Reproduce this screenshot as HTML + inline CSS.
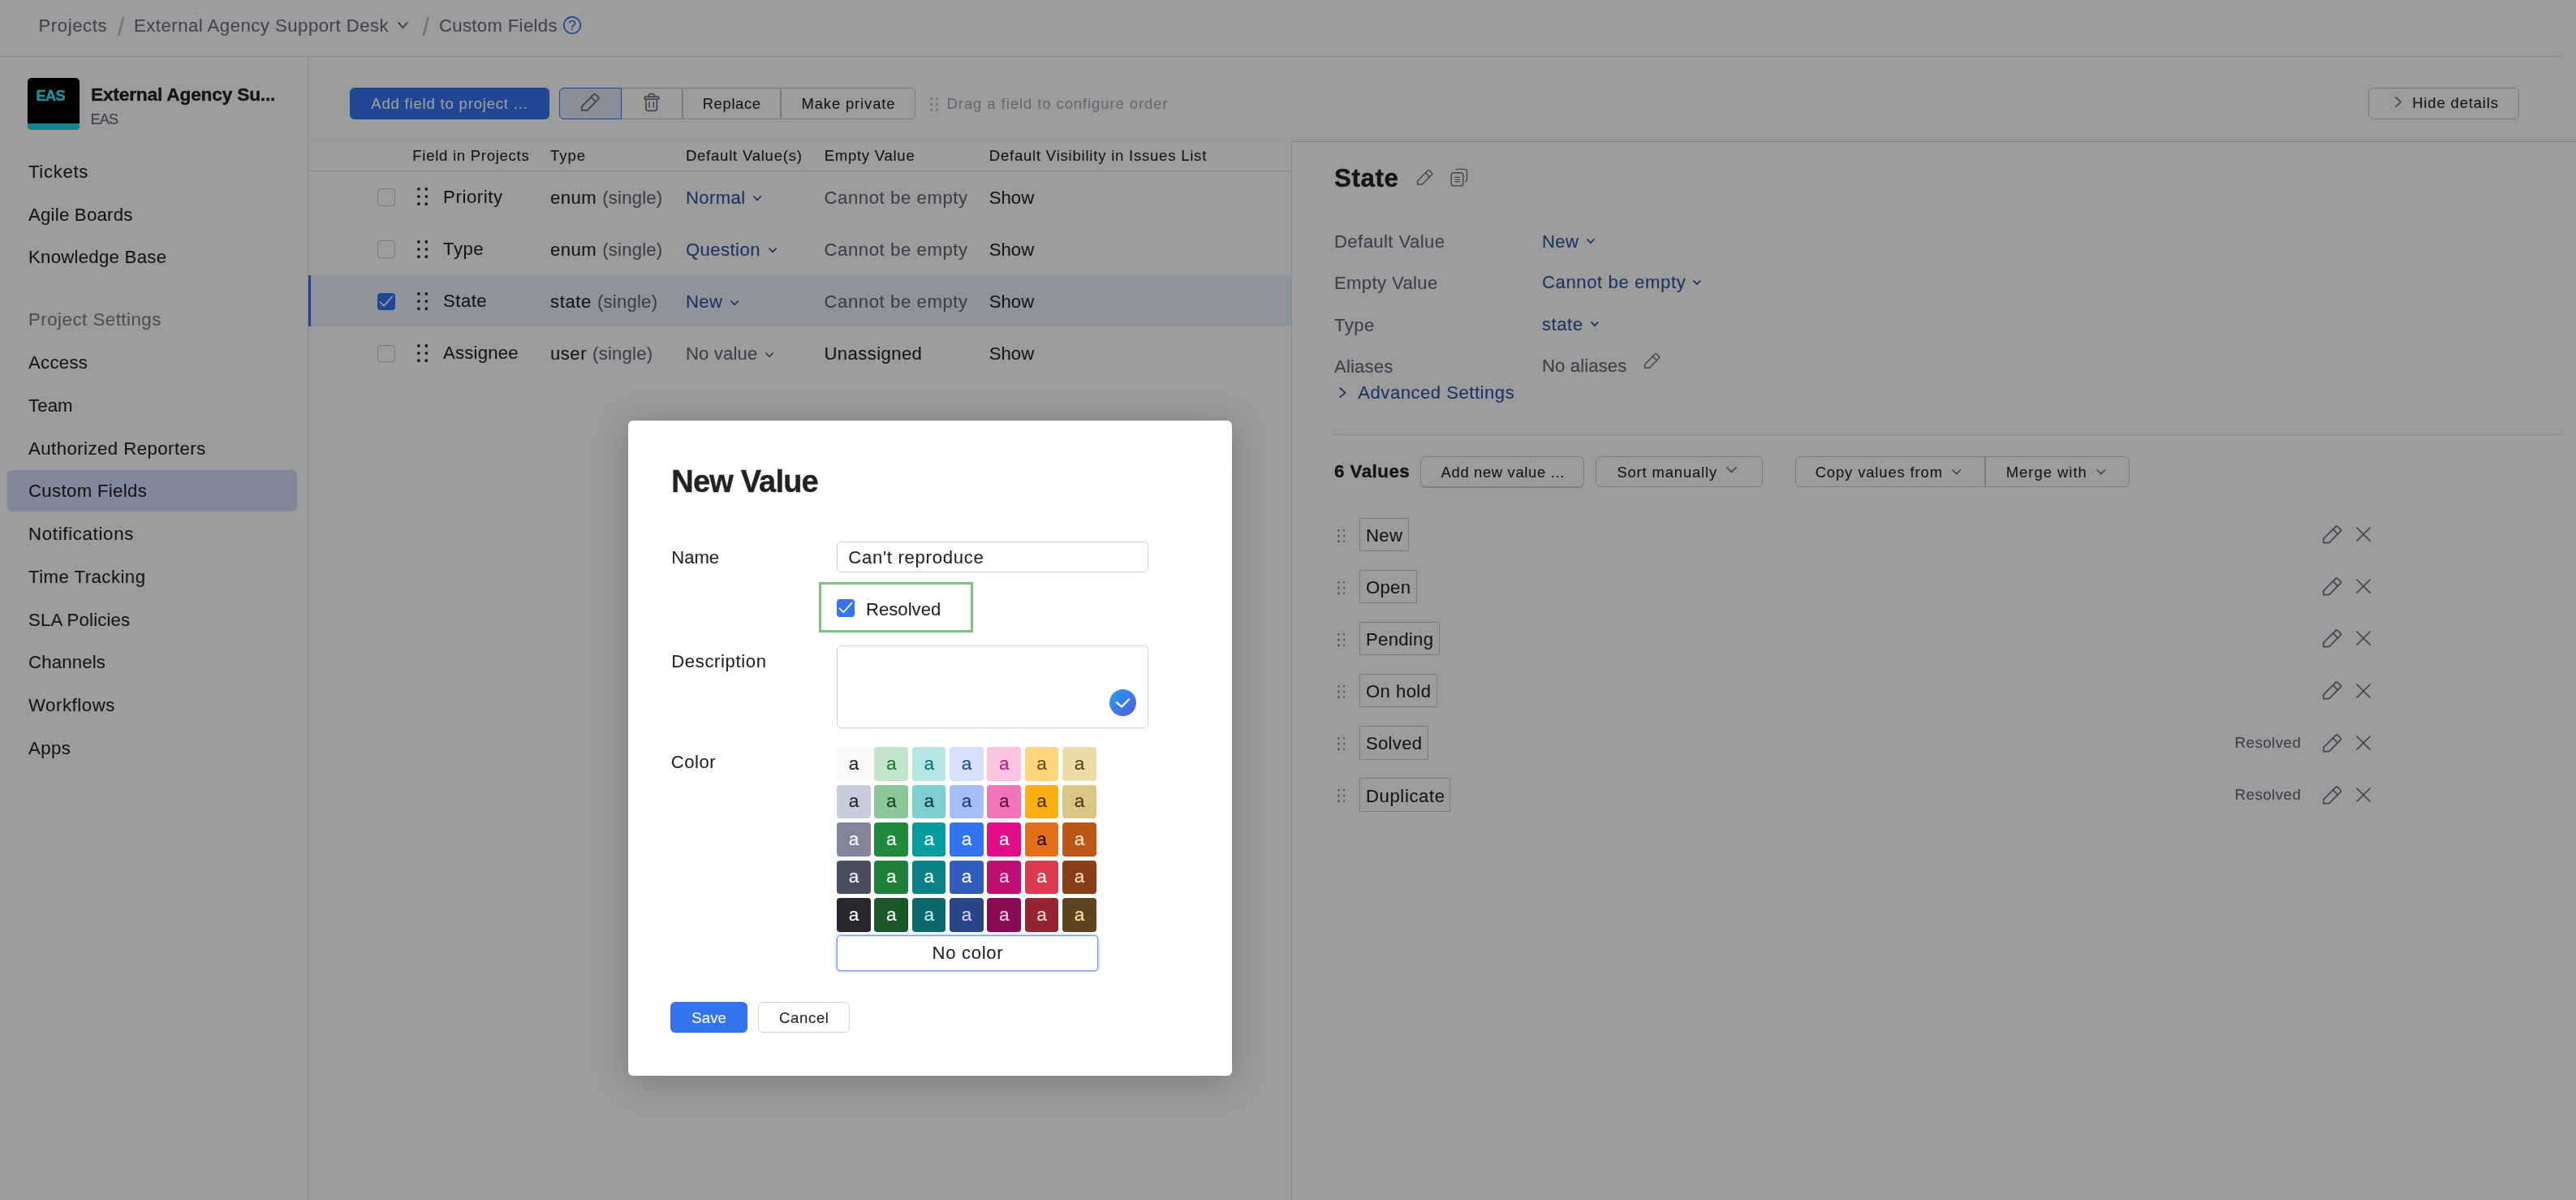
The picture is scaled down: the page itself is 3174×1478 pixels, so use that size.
<!DOCTYPE html>
<html lang="en">
<head>
<meta charset="utf-8">
<title>Custom Fields - External Agency Support Desk</title>
<style>
html,body{margin:0;padding:0;width:3174px;height:1478px;overflow:hidden;background:#fff;}
body{position:relative;font-family:"Liberation Sans", sans-serif;-webkit-font-smoothing:antialiased;}
.t{position:absolute;white-space:nowrap;line-height:1;font-family:"Liberation Sans", sans-serif;-webkit-text-stroke:0.1px;}
.b{position:absolute;display:block;}
header,nav,main,section,aside,form{display:block;margin:0;padding:0;}
#page,#overlay,#layer{position:absolute;left:0;top:0;width:3174px;height:1478px;}
#page,#layer{will-change:transform;}
#overlay{background:rgba(0,0,0,0.39);}
#dialog{position:absolute;left:774px;top:518px;width:744px;height:806.5px;background:#fff;border-radius:6px;box-shadow:0 6px 46px 2px rgba(0,0,0,0.2),0 0 4px rgba(0,0,0,0.05);}
</style>
</head>
<body>
<div id="page">
<header>
<div class="b" style="left:0.0px;top:69.0px;width:3155.0px;height:1.4px;background:#dfe1e5"></div>
<span id="t1" class="t" style="left:47.5px;top:21.0px;font-size:22.1px;color:#6c7084;letter-spacing:0.598px;">Projects</span>
<span id="t2" class="t" style="left:144.7px;top:18.0px;font-size:31.0px;color:#b9bcc8;">/</span>
<span id="t3" class="t" style="left:165.0px;top:21.0px;font-size:22.1px;color:#6c7084;letter-spacing:0.516px;">External Agency Support Desk</span>
<svg class="b" style="left:489.4px;top:25.9px;" width="14.8" height="10.0" viewBox="-2.000000 -2.000000 14.800000 10.000000" fill="none"><path d="M0 0 L5.40 6.00 L10.80 0" stroke="#6c7084" stroke-width="1.90" stroke-linecap="round" stroke-linejoin="round"/></svg>
<span id="t4" class="t" style="left:520.5px;top:18.0px;font-size:31.0px;color:#b9bcc8;">/</span>
<span id="t5" class="t" style="left:541.0px;top:21.0px;font-size:22.1px;color:#6c7084;letter-spacing:0.358px;">Custom Fields</span>
<svg class="b" style="left:693.0px;top:18.7px;" width="24.0" height="24.0" viewBox="0 0 24 24" fill="none"><circle cx="12.05" cy="12.05" r="10.2" stroke="#3574f0" stroke-width="1.7"/></svg>
<span id="t6" class="t" style="left:700.3px;top:23.0px;font-size:17.3px;color:#3574f0;">?</span>
</header>
<nav>
<div class="b" style="left:379.0px;top:70.0px;width:1.3px;height:1408.0px;background:#dfe1e5"></div>
<div class="b" style="left:34.0px;top:96.0px;width:64.0px;height:64.0px;background:#000;border-radius:5px;overflow:hidden"></div>
<div class="b" style="left:34.0px;top:152.0px;width:64.0px;height:8.0px;background:#27d7ee;border-radius:0 0 5px 5px"></div>
<span id="t7" class="t" style="left:44.4px;top:109.0px;font-size:18.2px;color:#30ecff;font-weight:700;-webkit-text-stroke:0.4px;letter-spacing:-0.553px;">EAS</span>
<span id="t8" class="t" style="left:112.0px;top:105.0px;font-size:22.7px;color:#1f2326;font-weight:700;-webkit-text-stroke:0.4px;letter-spacing:-0.188px;">External Agency Su...</span>
<span id="t9" class="t" style="left:111.6px;top:138.0px;font-size:18.3px;color:#62687d;letter-spacing:-0.997px;">EAS</span>
<div class="b" style="left:9.0px;top:579.0px;width:357.0px;height:51.0px;background:#d4defc;border-radius:6px"></div>
<span id="t10" class="t" style="left:35.0px;top:201.0px;font-size:22.2px;color:#1f2326;letter-spacing:0.641px;">Tickets</span>
<span id="t11" class="t" style="left:35.0px;top:254.0px;font-size:22.2px;color:#1f2326;letter-spacing:0.226px;">Agile Boards</span>
<span id="t12" class="t" style="left:35.0px;top:306.0px;font-size:22.2px;color:#1f2326;letter-spacing:0.267px;">Knowledge Base</span>
<span id="t13" class="t" style="left:35.0px;top:383.0px;font-size:22.2px;color:#7d8090;letter-spacing:0.527px;">Project Settings</span>
<span id="t14" class="t" style="left:35.0px;top:436.0px;font-size:22.2px;color:#1f2326;letter-spacing:0.277px;">Access</span>
<span id="t15" class="t" style="left:35.0px;top:489.0px;font-size:22.2px;color:#1f2326;letter-spacing:0.111px;">Team</span>
<span id="t16" class="t" style="left:35.0px;top:542.0px;font-size:22.2px;color:#1f2326;letter-spacing:0.455px;">Authorized Reporters</span>
<span id="t17" class="t" style="left:35.0px;top:594.0px;font-size:22.2px;color:#1f2326;letter-spacing:0.334px;">Custom Fields</span>
<span id="t18" class="t" style="left:35.0px;top:647.0px;font-size:22.2px;color:#1f2326;letter-spacing:0.703px;">Notifications</span>
<span id="t19" class="t" style="left:35.0px;top:700.0px;font-size:22.2px;color:#1f2326;letter-spacing:0.458px;">Time Tracking</span>
<span id="t20" class="t" style="left:35.0px;top:753.0px;font-size:22.2px;color:#1f2326;letter-spacing:0.169px;">SLA Policies</span>
<span id="t21" class="t" style="left:35.0px;top:805.0px;font-size:22.2px;color:#1f2326;letter-spacing:0.164px;">Channels</span>
<span id="t22" class="t" style="left:35.0px;top:858.0px;font-size:22.2px;color:#1f2326;letter-spacing:0.560px;">Workflows</span>
<span id="t23" class="t" style="left:35.0px;top:911.0px;font-size:22.2px;color:#1f2326;letter-spacing:0.407px;">Apps</span>
</nav>
<main>
<section>
<div class="b" style="left:431.0px;top:108.0px;width:246.0px;height:39.0px;background:#3574f0;border-radius:6px"></div>
<span id="t24" class="t" style="left:457.3px;top:119.0px;font-size:18.5px;color:#fff;letter-spacing:0.813px;">Add field to project ...</span>
<div class="b" style="left:689.3px;top:108.2px;width:438.8px;height:38.4px;border:1.6px solid #c9cbd3;box-sizing:border-box;border-radius:6px"></div>
<div class="b" style="left:840.2px;top:108.2px;width:1.4px;height:38.4px;background:#c9cbd3"></div>
<div class="b" style="left:961.2px;top:108.2px;width:1.4px;height:38.4px;background:#c9cbd3"></div>
<div class="b" style="left:689.3px;top:108.2px;width:76.8px;height:38.4px;background:#e2e9fb;border:1.6px solid #3574f0;box-sizing:border-box;border-radius:6px 0 0 6px"></div>
<svg class="b" style="left:715.3px;top:113.8px;" width="24.7" height="23.9" viewBox="-0.1 -0.85 24.25 23.45" fill="none"><g stroke="#6e7385" stroke-width="1.81" stroke-linejoin="round" stroke-linecap="round"><path d="M1.75 20.75 V15.9 L16.1 1.55 Q17.2 0.45 18.3 1.55 L21.75 5 Q22.85 6.1 21.75 7.2 L8.2 20.75 Z"/><path d="M12.9 4.75 L18.55 10.4"/></g></svg>
<svg class="b" style="left:793.0px;top:113.5px;" width="20.2" height="24.0" viewBox="0 0 20.2 24" fill="none"><g stroke="#6e7385" stroke-width="1.7" stroke-linecap="round" stroke-linejoin="round"><path d="M6.25 5.4 V3.55 a2 2 0 0 1 2 -2 h3 a2 2 0 0 1 2 2 V5.4"/><rect x="1.0" y="5.1" width="17.9" height="3.0" rx="1.3"/><path d="M2.9 8.1 V19.8 a2.5 2.5 0 0 0 2.5 2.5 H13.9 a2.5 2.5 0 0 0 2.5 -2.5 V8.1"/><path d="M7.1 11.7 V18.2 M12.3 11.7 V18.2" stroke-width="1.5"/></g></svg>
<span id="t25" class="t" style="left:865.7px;top:119.0px;font-size:18.4px;color:#1f2326;letter-spacing:0.653px;">Replace</span>
<span id="t26" class="t" style="left:987.5px;top:119.0px;font-size:18.4px;color:#1f2326;letter-spacing:0.884px;">Make private</span>
<svg class="b" style="left:1145.5px;top:119.5px;" width="10.0" height="17.0" viewBox="0 0 10.000000 17.000000" fill="none"><circle cx="1.50" cy="1.50" r="1.50" fill="#b9bbc6"/><circle cx="8.50" cy="1.50" r="1.50" fill="#b9bbc6"/><circle cx="1.50" cy="8.50" r="1.50" fill="#b9bbc6"/><circle cx="8.50" cy="8.50" r="1.50" fill="#b9bbc6"/><circle cx="1.50" cy="15.50" r="1.50" fill="#b9bbc6"/><circle cx="8.50" cy="15.50" r="1.50" fill="#b9bbc6"/></svg>
<span id="t27" class="t" style="left:1166.6px;top:119.0px;font-size:18.4px;color:#a9acba;letter-spacing:0.956px;">Drag a field to configure order</span>
<div class="b" style="left:2918.4px;top:108.3px;width:185.2px;height:38.3px;border:1.6px solid #c9cbd3;box-sizing:border-box;border-radius:6px"></div>
<svg class="b" style="left:2949.7px;top:118.4px;" width="10.2" height="15.2" viewBox="-2.000000 -2.000000 10.200000 15.200000" fill="none"><path d="M0 0 L6.20 5.60 L0 11.20" stroke="#6e7385" stroke-width="1.70" stroke-linecap="round" stroke-linejoin="round"/></svg>
<span id="t28" class="t" style="left:2972.2px;top:118.0px;font-size:18.4px;color:#1f2326;letter-spacing:0.882px;">Hide details</span>
</section>
<section>
<div class="b" style="left:380.0px;top:172.0px;width:2794.0px;height:1.2px;background:#f1f2f5"></div>
<div class="b" style="left:380.0px;top:210.0px;width:1211.0px;height:1.4px;background:#dfe1e5"></div>
<div class="b" style="left:380.0px;top:339.4px;width:1211.0px;height:62.6px;background:#e9f0ff"></div>
<div class="b" style="left:380.0px;top:339.4px;width:3.2px;height:62.6px;background:#3574f0"></div>
<span id="t29" class="t" style="left:508.3px;top:183.0px;font-size:18.5px;color:#1f2326;letter-spacing:0.737px;">Field in Projects</span>
<span id="t30" class="t" style="left:678.1px;top:183.0px;font-size:18.5px;color:#1f2326;letter-spacing:0.964px;">Type</span>
<span id="t31" class="t" style="left:844.9px;top:183.0px;font-size:18.5px;color:#1f2326;letter-spacing:0.781px;">Default Value(s)</span>
<span id="t32" class="t" style="left:1015.7px;top:183.0px;font-size:18.5px;color:#1f2326;letter-spacing:0.748px;">Empty Value</span>
<span id="t33" class="t" style="left:1218.8px;top:183.0px;font-size:18.5px;color:#1f2326;letter-spacing:0.787px;">Default Visibility in Issues List</span>
<div class="b" style="left:465.4px;top:232.3px;width:21.4px;height:21.4px;background:#fff;border:1.4px solid #c4c6cf;box-sizing:border-box;border-radius:4px"></div>
<svg class="b" style="left:514.0px;top:231.4px;" width="13.2" height="22.0" viewBox="0 0 13.200000 22.000000" fill="none"><circle cx="1.85" cy="1.85" r="1.85" fill="#1f2326"/><circle cx="11.35" cy="1.85" r="1.85" fill="#1f2326"/><circle cx="1.85" cy="11.00" r="1.85" fill="#1f2326"/><circle cx="11.35" cy="11.00" r="1.85" fill="#1f2326"/><circle cx="1.85" cy="20.15" r="1.85" fill="#1f2326"/><circle cx="11.35" cy="20.15" r="1.85" fill="#1f2326"/></svg>
<span id="t34" class="t" style="left:546.1px;top:232.0px;font-size:22.1px;color:#1f2326;letter-spacing:0.607px;">Priority</span>
<span id="t35" class="t" style="left:678.1px;top:233.0px;font-size:22.1px;color:#1f2326;letter-spacing:0.406px;">enum</span>
<span id="t36" class="t" style="left:742.2px;top:233.0px;font-size:22.1px;color:#62687d;letter-spacing:0.221px;">(single)</span>
<span id="t37" class="t" style="left:844.9px;top:233.0px;font-size:22.1px;color:#2e55a3;letter-spacing:0.419px;">Normal</span>
<svg class="b" style="left:927.2px;top:240.3px;" width="12.2" height="8.3" viewBox="-2.000000 -2.000000 12.200000 8.300000" fill="none"><path d="M0 0 L4.10 4.30 L8.20 0" stroke="#2e55a3" stroke-width="1.80" stroke-linecap="round" stroke-linejoin="round"/></svg>
<span id="t38" class="t" style="left:1015.5px;top:233.0px;font-size:22.1px;color:#62687d;letter-spacing:0.595px;">Cannot be empty</span>
<span id="t39" class="t" style="left:1218.8px;top:233.0px;font-size:22.1px;color:#1f2326;letter-spacing:0.006px;">Show</span>
<div class="b" style="left:465.4px;top:296.4px;width:21.4px;height:21.4px;background:#fff;border:1.4px solid #c4c6cf;box-sizing:border-box;border-radius:4px"></div>
<svg class="b" style="left:514.0px;top:295.5px;" width="13.2" height="22.0" viewBox="0 0 13.200000 22.000000" fill="none"><circle cx="1.85" cy="1.85" r="1.85" fill="#1f2326"/><circle cx="11.35" cy="1.85" r="1.85" fill="#1f2326"/><circle cx="1.85" cy="11.00" r="1.85" fill="#1f2326"/><circle cx="11.35" cy="11.00" r="1.85" fill="#1f2326"/><circle cx="1.85" cy="20.15" r="1.85" fill="#1f2326"/><circle cx="11.35" cy="20.15" r="1.85" fill="#1f2326"/></svg>
<span id="t40" class="t" style="left:546.1px;top:296.0px;font-size:22.1px;color:#1f2326;letter-spacing:0.531px;">Type</span>
<span id="t41" class="t" style="left:678.1px;top:297.0px;font-size:22.1px;color:#1f2326;letter-spacing:0.406px;">enum</span>
<span id="t42" class="t" style="left:742.2px;top:297.0px;font-size:22.1px;color:#62687d;letter-spacing:0.221px;">(single)</span>
<span id="t43" class="t" style="left:844.9px;top:297.0px;font-size:22.1px;color:#2e55a3;letter-spacing:0.452px;">Question</span>
<svg class="b" style="left:945.5px;top:304.4px;" width="12.2" height="8.3" viewBox="-2.000000 -2.000000 12.200000 8.300000" fill="none"><path d="M0 0 L4.10 4.30 L8.20 0" stroke="#2e55a3" stroke-width="1.80" stroke-linecap="round" stroke-linejoin="round"/></svg>
<span id="t44" class="t" style="left:1015.5px;top:297.0px;font-size:22.1px;color:#62687d;letter-spacing:0.595px;">Cannot be empty</span>
<span id="t45" class="t" style="left:1218.8px;top:297.0px;font-size:22.1px;color:#1f2326;letter-spacing:0.006px;">Show</span>
<div class="b" style="left:465.4px;top:360.5px;width:21.4px;height:21.4px;background:#3574f0;border-radius:4px"></div>
<svg class="b" style="left:465.4px;top:360.5px;" width="21.4" height="21.4" viewBox="0 0 21.400000 21.400000" fill="none"><path d="M3.21 11.13 L8.24 15.62 L17.98 4.49" stroke="#fff" stroke-width="1.70" stroke-linecap="round" stroke-linejoin="round"/></svg>
<svg class="b" style="left:514.0px;top:359.6px;" width="13.2" height="22.0" viewBox="0 0 13.200000 22.000000" fill="none"><circle cx="1.85" cy="1.85" r="1.85" fill="#1f2326"/><circle cx="11.35" cy="1.85" r="1.85" fill="#1f2326"/><circle cx="1.85" cy="11.00" r="1.85" fill="#1f2326"/><circle cx="11.35" cy="11.00" r="1.85" fill="#1f2326"/><circle cx="1.85" cy="20.15" r="1.85" fill="#1f2326"/><circle cx="11.35" cy="20.15" r="1.85" fill="#1f2326"/></svg>
<span id="t46" class="t" style="left:546.1px;top:360.0px;font-size:22.1px;color:#1f2326;letter-spacing:0.477px;">State</span>
<span id="t47" class="t" style="left:678.1px;top:361.0px;font-size:22.1px;color:#1f2326;letter-spacing:0.598px;">state</span>
<span id="t48" class="t" style="left:736.0px;top:361.0px;font-size:22.1px;color:#62687d;letter-spacing:0.221px;">(single)</span>
<span id="t49" class="t" style="left:844.9px;top:361.0px;font-size:22.1px;color:#2e55a3;letter-spacing:0.398px;">New</span>
<svg class="b" style="left:898.9px;top:368.5px;" width="12.2" height="8.3" viewBox="-2.000000 -2.000000 12.200000 8.300000" fill="none"><path d="M0 0 L4.10 4.30 L8.20 0" stroke="#2e55a3" stroke-width="1.80" stroke-linecap="round" stroke-linejoin="round"/></svg>
<span id="t50" class="t" style="left:1015.5px;top:361.0px;font-size:22.1px;color:#62687d;letter-spacing:0.595px;">Cannot be empty</span>
<span id="t51" class="t" style="left:1218.8px;top:361.0px;font-size:22.1px;color:#1f2326;letter-spacing:0.006px;">Show</span>
<div class="b" style="left:465.4px;top:424.6px;width:21.4px;height:21.4px;background:#fff;border:1.4px solid #c4c6cf;box-sizing:border-box;border-radius:4px"></div>
<svg class="b" style="left:514.0px;top:423.7px;" width="13.2" height="22.0" viewBox="0 0 13.200000 22.000000" fill="none"><circle cx="1.85" cy="1.85" r="1.85" fill="#1f2326"/><circle cx="11.35" cy="1.85" r="1.85" fill="#1f2326"/><circle cx="1.85" cy="11.00" r="1.85" fill="#1f2326"/><circle cx="11.35" cy="11.00" r="1.85" fill="#1f2326"/><circle cx="1.85" cy="20.15" r="1.85" fill="#1f2326"/><circle cx="11.35" cy="20.15" r="1.85" fill="#1f2326"/></svg>
<span id="t52" class="t" style="left:546.1px;top:424.0px;font-size:22.1px;color:#1f2326;letter-spacing:0.230px;">Assignee</span>
<span id="t53" class="t" style="left:678.1px;top:425.0px;font-size:22.1px;color:#1f2326;letter-spacing:0.472px;">user</span>
<span id="t54" class="t" style="left:730.1px;top:425.0px;font-size:22.1px;color:#62687d;letter-spacing:0.221px;">(single)</span>
<span id="t55" class="t" style="left:844.9px;top:425.0px;font-size:22.1px;color:#62687d;letter-spacing:0.185px;">No value</span>
<svg class="b" style="left:942.4px;top:432.6px;" width="12.2" height="8.3" viewBox="-2.000000 -2.000000 12.200000 8.300000" fill="none"><path d="M0 0 L4.10 4.30 L8.20 0" stroke="#62687d" stroke-width="1.80" stroke-linecap="round" stroke-linejoin="round"/></svg>
<span id="t56" class="t" style="left:1015.5px;top:425.0px;font-size:22.1px;color:#1f2326;letter-spacing:0.413px;">Unassigned</span>
<span id="t57" class="t" style="left:1218.8px;top:425.0px;font-size:22.1px;color:#1f2326;letter-spacing:0.006px;">Show</span>
</section>
<aside>
<div class="b" style="left:1591.0px;top:174.0px;width:1583.0px;height:1.4px;background:#dfe1e5"></div>
<div class="b" style="left:1591.0px;top:174.0px;width:1.4px;height:1304.0px;background:#dfe1e5"></div>
<span id="t58" class="t" style="left:1644.0px;top:204.0px;font-size:31.3px;color:#1f2326;font-weight:700;-webkit-text-stroke:0.4px;letter-spacing:0.567px;">State</span>
<svg class="b" style="left:1744.8px;top:208.4px;" width="21.4" height="20.7" viewBox="-0.1 -0.85 24.25 23.45" fill="none"><g stroke="#6e7385" stroke-width="1.59" stroke-linejoin="round" stroke-linecap="round"><path d="M1.75 20.75 V15.9 L16.1 1.55 Q17.2 0.45 18.3 1.55 L21.75 5 Q22.85 6.1 21.75 7.2 L8.2 20.75 Z"/><path d="M12.9 4.75 L18.55 10.4"/></g></svg>
<svg class="b" style="left:1787.0px;top:207.0px;" width="22.0" height="23.0" viewBox="0 0 22 23" fill="none"><g stroke="#6e7385" stroke-width="1.4" stroke-linecap="round" stroke-linejoin="round"><rect x="1.3" y="5.8" width="14.5" height="16.1" rx="3"/><path d="M6.9 2.0 Q8 1.4 9.4 1.4 H17.3 a3.2 3.2 0 0 1 3.2 3.2 V13.6 Q20.5 15.8 18.7 16.6"/><path d="M5.9 11.3 H11.7 M5.9 14.1 H11.7 M5.9 16.9 H11.7" stroke-width="1.15"/></g></svg>
<span id="t59" class="t" style="left:1644.0px;top:287.0px;font-size:22.1px;color:#62687d;letter-spacing:0.415px;">Default Value</span>
<span id="t60" class="t" style="left:1900.0px;top:287.0px;font-size:22.1px;color:#2e55a3;letter-spacing:0.398px;">New</span>
<svg class="b" style="left:1953.8px;top:293.0px;" width="11.8" height="8.2" viewBox="-2.000000 -2.000000 11.800000 8.200000" fill="none"><path d="M0 0 L3.90 4.20 L7.80 0" stroke="#2e55a3" stroke-width="1.80" stroke-linecap="round" stroke-linejoin="round"/></svg>
<span id="t61" class="t" style="left:1644.0px;top:338.0px;font-size:22.1px;color:#62687d;letter-spacing:0.367px;">Empty Value</span>
<span id="t62" class="t" style="left:1900.0px;top:337.0px;font-size:22.1px;color:#2e55a3;letter-spacing:0.602px;">Cannot be empty</span>
<svg class="b" style="left:2085.2px;top:344.0px;" width="11.8" height="8.2" viewBox="-2.000000 -2.000000 11.800000 8.200000" fill="none"><path d="M0 0 L3.90 4.20 L7.80 0" stroke="#2e55a3" stroke-width="1.80" stroke-linecap="round" stroke-linejoin="round"/></svg>
<span id="t63" class="t" style="left:1644.0px;top:390.0px;font-size:22.1px;color:#62687d;letter-spacing:0.465px;">Type</span>
<span id="t64" class="t" style="left:1900.0px;top:389.0px;font-size:22.1px;color:#2e55a3;letter-spacing:0.523px;">state</span>
<svg class="b" style="left:1958.8px;top:395.4px;" width="11.8" height="8.2" viewBox="-2.000000 -2.000000 11.800000 8.200000" fill="none"><path d="M0 0 L3.90 4.20 L7.80 0" stroke="#2e55a3" stroke-width="1.80" stroke-linecap="round" stroke-linejoin="round"/></svg>
<span id="t65" class="t" style="left:1644.0px;top:441.0px;font-size:22.1px;color:#62687d;letter-spacing:0.178px;">Aliases</span>
<span id="t66" class="t" style="left:1900.0px;top:440.0px;font-size:22.1px;color:#62687d;letter-spacing:0.127px;">No aliases</span>
<svg class="b" style="left:2024.7px;top:433.5px;" width="21.4" height="20.7" viewBox="-0.1 -0.85 24.25 23.45" fill="none"><g stroke="#6e7385" stroke-width="1.59" stroke-linejoin="round" stroke-linecap="round"><path d="M1.75 20.75 V15.9 L16.1 1.55 Q17.2 0.45 18.3 1.55 L21.75 5 Q22.85 6.1 21.75 7.2 L8.2 20.75 Z"/><path d="M12.9 4.75 L18.55 10.4"/></g></svg>
<svg class="b" style="left:1649.2px;top:475.9px;" width="10.6" height="15.2" viewBox="-2.000000 -2.000000 10.600000 15.200000" fill="none"><path d="M0 0 L6.60 5.60 L0 11.20" stroke="#2e55a3" stroke-width="1.80" stroke-linecap="round" stroke-linejoin="round"/></svg>
<span id="t67" class="t" style="left:1673.3px;top:473.0px;font-size:22.1px;color:#2e55a3;letter-spacing:0.509px;">Advanced Settings</span>
<div class="b" style="left:1643.5px;top:534.6px;width:1513.5px;height:1.4px;background:#dfe1e5"></div>
<span id="t68" class="t" style="left:1644.0px;top:570.0px;font-size:22.3px;color:#1f2326;font-weight:700;-webkit-text-stroke:0.4px;letter-spacing:0.491px;">6 Values</span>
<div class="b" style="left:1750.4px;top:562.1px;width:202.1px;height:38.0px;border:1.6px solid #c9cbd3;box-sizing:border-box;border-radius:6px;box-shadow:0 1px 0 #c9cbd3"></div>
<span id="t69" class="t" style="left:1775.6px;top:573.0px;font-size:18.4px;color:#1f2326;letter-spacing:0.663px;">Add new value ...</span>
<div class="b" style="left:1966.3px;top:562.1px;width:205.3px;height:38.0px;border:1.6px solid #c9cbd3;box-sizing:border-box;border-radius:6px"></div>
<span id="t70" class="t" style="left:1992.4px;top:573.0px;font-size:18.4px;color:#1f2326;letter-spacing:0.864px;">Sort manually</span>
<svg class="b" style="left:2126.2px;top:574.4px;" width="15.0" height="9.4" viewBox="-2.000000 -2.000000 15.000000 9.400000" fill="none"><path d="M0 0 L5.50 5.40 L11.00 0" stroke="#6e7385" stroke-width="1.70" stroke-linecap="round" stroke-linejoin="round"/></svg>
<div class="b" style="left:2211.5px;top:562.1px;width:235.0px;height:38.0px;border:1.6px solid #c9cbd3;box-sizing:border-box;border-radius:6px 0 0 6px"></div>
<span id="t71" class="t" style="left:2236.7px;top:573.0px;font-size:18.4px;color:#1f2326;letter-spacing:0.880px;">Copy values from</span>
<svg class="b" style="left:2403.9px;top:576.8px;" width="13.4" height="8.6" viewBox="-2.000000 -2.000000 13.400000 8.600000" fill="none"><path d="M0 0 L4.70 4.60 L9.40 0" stroke="#6e7385" stroke-width="1.70" stroke-linecap="round" stroke-linejoin="round"/></svg>
<div class="b" style="left:2444.6px;top:562.1px;width:179.8px;height:38.0px;border:1.6px solid #c9cbd3;box-sizing:border-box;border-radius:0 6px 6px 0"></div>
<span id="t72" class="t" style="left:2471.8px;top:573.0px;font-size:18.4px;color:#1f2326;letter-spacing:1.005px;">Merge with</span>
<svg class="b" style="left:2581.5px;top:576.8px;" width="13.4" height="8.6" viewBox="-2.000000 -2.000000 13.400000 8.600000" fill="none"><path d="M0 0 L4.70 4.60 L9.40 0" stroke="#6e7385" stroke-width="1.70" stroke-linecap="round" stroke-linejoin="round"/></svg>
<svg class="b" style="left:1647.9px;top:651.8px;" width="9.6" height="16.2" viewBox="0 0 9.600000 16.200000" fill="none"><circle cx="1.30" cy="1.30" r="1.30" fill="#82859a"/><circle cx="8.30" cy="1.30" r="1.30" fill="#82859a"/><circle cx="1.30" cy="8.10" r="1.30" fill="#82859a"/><circle cx="8.30" cy="8.10" r="1.30" fill="#82859a"/><circle cx="1.30" cy="14.90" r="1.30" fill="#82859a"/><circle cx="8.30" cy="14.90" r="1.30" fill="#82859a"/></svg>
<div class="b" style="left:1675.2px;top:637.6px;width:60.5px;height:41.5px;border:1.3px solid #c9cbd3;box-sizing:border-box;border-radius:1px"></div>
<span id="t73" class="t" style="left:1683.0px;top:649.0px;font-size:22.1px;color:#1f2326;letter-spacing:0.398px;">New</span>
<svg class="b" style="left:2860.7px;top:646.1px;" width="25.4" height="24.6" viewBox="-0.1 -0.85 24.25 23.45" fill="none"><g stroke="#6e7385" stroke-width="1.62" stroke-linejoin="round" stroke-linecap="round"><path d="M1.75 20.75 V15.9 L16.1 1.55 Q17.2 0.45 18.3 1.55 L21.75 5 Q22.85 6.1 21.75 7.2 L8.2 20.75 Z"/><path d="M12.9 4.75 L18.55 10.4"/></g></svg>
<svg class="b" style="left:2901.8px;top:648.2px;" width="20.2" height="20.2" viewBox="-2 -2 20.200000 20.200000" fill="none"><path d="M0 0 L16.20 16.20 M16.20 0 L0 16.20" stroke="#6e7385" stroke-width="1.70" stroke-linecap="round"/></svg>
<svg class="b" style="left:1647.9px;top:715.9px;" width="9.6" height="16.2" viewBox="0 0 9.600000 16.200000" fill="none"><circle cx="1.30" cy="1.30" r="1.30" fill="#82859a"/><circle cx="8.30" cy="1.30" r="1.30" fill="#82859a"/><circle cx="1.30" cy="8.10" r="1.30" fill="#82859a"/><circle cx="8.30" cy="8.10" r="1.30" fill="#82859a"/><circle cx="1.30" cy="14.90" r="1.30" fill="#82859a"/><circle cx="8.30" cy="14.90" r="1.30" fill="#82859a"/></svg>
<div class="b" style="left:1675.2px;top:701.8px;width:70.6px;height:41.5px;border:1.3px solid #c9cbd3;box-sizing:border-box;border-radius:1px"></div>
<span id="t74" class="t" style="left:1683.0px;top:713.0px;font-size:22.1px;color:#1f2326;letter-spacing:0.312px;">Open</span>
<svg class="b" style="left:2860.7px;top:710.2px;" width="25.4" height="24.6" viewBox="-0.1 -0.85 24.25 23.45" fill="none"><g stroke="#6e7385" stroke-width="1.62" stroke-linejoin="round" stroke-linecap="round"><path d="M1.75 20.75 V15.9 L16.1 1.55 Q17.2 0.45 18.3 1.55 L21.75 5 Q22.85 6.1 21.75 7.2 L8.2 20.75 Z"/><path d="M12.9 4.75 L18.55 10.4"/></g></svg>
<svg class="b" style="left:2901.8px;top:712.3px;" width="20.2" height="20.2" viewBox="-2 -2 20.200000 20.200000" fill="none"><path d="M0 0 L16.20 16.20 M16.20 0 L0 16.20" stroke="#6e7385" stroke-width="1.70" stroke-linecap="round"/></svg>
<svg class="b" style="left:1647.9px;top:780.0px;" width="9.6" height="16.2" viewBox="0 0 9.600000 16.200000" fill="none"><circle cx="1.30" cy="1.30" r="1.30" fill="#82859a"/><circle cx="8.30" cy="1.30" r="1.30" fill="#82859a"/><circle cx="1.30" cy="8.10" r="1.30" fill="#82859a"/><circle cx="8.30" cy="8.10" r="1.30" fill="#82859a"/><circle cx="1.30" cy="14.90" r="1.30" fill="#82859a"/><circle cx="8.30" cy="14.90" r="1.30" fill="#82859a"/></svg>
<div class="b" style="left:1675.2px;top:765.8px;width:98.6px;height:41.5px;border:1.3px solid #c9cbd3;box-sizing:border-box;border-radius:1px"></div>
<span id="t75" class="t" style="left:1683.0px;top:777.0px;font-size:22.1px;color:#1f2326;letter-spacing:0.318px;">Pending</span>
<svg class="b" style="left:2860.7px;top:774.3px;" width="25.4" height="24.6" viewBox="-0.1 -0.85 24.25 23.45" fill="none"><g stroke="#6e7385" stroke-width="1.62" stroke-linejoin="round" stroke-linecap="round"><path d="M1.75 20.75 V15.9 L16.1 1.55 Q17.2 0.45 18.3 1.55 L21.75 5 Q22.85 6.1 21.75 7.2 L8.2 20.75 Z"/><path d="M12.9 4.75 L18.55 10.4"/></g></svg>
<svg class="b" style="left:2901.8px;top:776.4px;" width="20.2" height="20.2" viewBox="-2 -2 20.200000 20.200000" fill="none"><path d="M0 0 L16.20 16.20 M16.20 0 L0 16.20" stroke="#6e7385" stroke-width="1.70" stroke-linecap="round"/></svg>
<svg class="b" style="left:1647.9px;top:844.1px;" width="9.6" height="16.2" viewBox="0 0 9.600000 16.200000" fill="none"><circle cx="1.30" cy="1.30" r="1.30" fill="#82859a"/><circle cx="8.30" cy="1.30" r="1.30" fill="#82859a"/><circle cx="1.30" cy="8.10" r="1.30" fill="#82859a"/><circle cx="8.30" cy="8.10" r="1.30" fill="#82859a"/><circle cx="1.30" cy="14.90" r="1.30" fill="#82859a"/><circle cx="8.30" cy="14.90" r="1.30" fill="#82859a"/></svg>
<div class="b" style="left:1675.2px;top:829.9px;width:95.4px;height:41.5px;border:1.3px solid #c9cbd3;box-sizing:border-box;border-radius:1px"></div>
<span id="t76" class="t" style="left:1683.0px;top:841.0px;font-size:22.1px;color:#1f2326;letter-spacing:0.435px;">On hold</span>
<svg class="b" style="left:2860.7px;top:838.4px;" width="25.4" height="24.6" viewBox="-0.1 -0.85 24.25 23.45" fill="none"><g stroke="#6e7385" stroke-width="1.62" stroke-linejoin="round" stroke-linecap="round"><path d="M1.75 20.75 V15.9 L16.1 1.55 Q17.2 0.45 18.3 1.55 L21.75 5 Q22.85 6.1 21.75 7.2 L8.2 20.75 Z"/><path d="M12.9 4.75 L18.55 10.4"/></g></svg>
<svg class="b" style="left:2901.8px;top:840.5px;" width="20.2" height="20.2" viewBox="-2 -2 20.200000 20.200000" fill="none"><path d="M0 0 L16.20 16.20 M16.20 0 L0 16.20" stroke="#6e7385" stroke-width="1.70" stroke-linecap="round"/></svg>
<svg class="b" style="left:1647.9px;top:908.2px;" width="9.6" height="16.2" viewBox="0 0 9.600000 16.200000" fill="none"><circle cx="1.30" cy="1.30" r="1.30" fill="#82859a"/><circle cx="8.30" cy="1.30" r="1.30" fill="#82859a"/><circle cx="1.30" cy="8.10" r="1.30" fill="#82859a"/><circle cx="8.30" cy="8.10" r="1.30" fill="#82859a"/><circle cx="1.30" cy="14.90" r="1.30" fill="#82859a"/><circle cx="8.30" cy="14.90" r="1.30" fill="#82859a"/></svg>
<div class="b" style="left:1675.2px;top:894.0px;width:84.4px;height:41.5px;border:1.3px solid #c9cbd3;box-sizing:border-box;border-radius:1px"></div>
<span id="t77" class="t" style="left:1683.0px;top:905.0px;font-size:22.1px;color:#1f2326;letter-spacing:0.287px;">Solved</span>
<svg class="b" style="left:2860.7px;top:902.5px;" width="25.4" height="24.6" viewBox="-0.1 -0.85 24.25 23.45" fill="none"><g stroke="#6e7385" stroke-width="1.62" stroke-linejoin="round" stroke-linecap="round"><path d="M1.75 20.75 V15.9 L16.1 1.55 Q17.2 0.45 18.3 1.55 L21.75 5 Q22.85 6.1 21.75 7.2 L8.2 20.75 Z"/><path d="M12.9 4.75 L18.55 10.4"/></g></svg>
<svg class="b" style="left:2901.8px;top:904.6px;" width="20.2" height="20.2" viewBox="-2 -2 20.200000 20.200000" fill="none"><path d="M0 0 L16.20 16.20 M16.20 0 L0 16.20" stroke="#6e7385" stroke-width="1.70" stroke-linecap="round"/></svg>
<span id="t78" class="t" style="left:2753.6px;top:906.0px;font-size:18.7px;color:#62687d;letter-spacing:0.468px;">Resolved</span>
<svg class="b" style="left:1647.9px;top:972.3px;" width="9.6" height="16.2" viewBox="0 0 9.600000 16.200000" fill="none"><circle cx="1.30" cy="1.30" r="1.30" fill="#82859a"/><circle cx="8.30" cy="1.30" r="1.30" fill="#82859a"/><circle cx="1.30" cy="8.10" r="1.30" fill="#82859a"/><circle cx="8.30" cy="8.10" r="1.30" fill="#82859a"/><circle cx="1.30" cy="14.90" r="1.30" fill="#82859a"/><circle cx="8.30" cy="14.90" r="1.30" fill="#82859a"/></svg>
<div class="b" style="left:1675.2px;top:958.1px;width:112.3px;height:41.5px;border:1.3px solid #c9cbd3;box-sizing:border-box;border-radius:1px"></div>
<span id="t79" class="t" style="left:1683.0px;top:970.0px;font-size:22.1px;color:#1f2326;letter-spacing:0.611px;">Duplicate</span>
<svg class="b" style="left:2860.7px;top:966.6px;" width="25.4" height="24.6" viewBox="-0.1 -0.85 24.25 23.45" fill="none"><g stroke="#6e7385" stroke-width="1.62" stroke-linejoin="round" stroke-linecap="round"><path d="M1.75 20.75 V15.9 L16.1 1.55 Q17.2 0.45 18.3 1.55 L21.75 5 Q22.85 6.1 21.75 7.2 L8.2 20.75 Z"/><path d="M12.9 4.75 L18.55 10.4"/></g></svg>
<svg class="b" style="left:2901.8px;top:968.7px;" width="20.2" height="20.2" viewBox="-2 -2 20.200000 20.200000" fill="none"><path d="M0 0 L16.20 16.20 M16.20 0 L0 16.20" stroke="#6e7385" stroke-width="1.70" stroke-linecap="round"/></svg>
<span id="t80" class="t" style="left:2753.6px;top:970.0px;font-size:18.7px;color:#62687d;letter-spacing:0.468px;">Resolved</span>
</aside>
</main>
</div>
<div id="overlay"></div>
<div id="layer">
<div id="dialog" role="dialog" aria-label="New Value"></div>
<form>
<span id="t81" class="t" style="left:827.3px;top:574.0px;font-size:38.0px;color:#1f2326;font-weight:700;-webkit-text-stroke:0.4px;letter-spacing:-0.823px;">New Value</span>
<span id="t82" class="t" style="left:827.3px;top:676.0px;font-size:22.1px;color:#1f2326;letter-spacing:-0.079px;">Name</span>
<div class="b" style="left:1031.3px;top:667.3px;width:383.4px;height:37.6px;border:1.4px solid #d1d3db;box-sizing:border-box;border-radius:5px;background:#fff"></div>
<span id="t83" class="t" style="left:1045.3px;top:676.0px;font-size:22.1px;color:#1f2326;letter-spacing:0.706px;">Can't reproduce</span>
<div class="b" style="left:1009.3px;top:717.3px;width:189.4px;height:61.6px;border:3.8px solid #7dc283;box-sizing:border-box"></div>
<div class="b" style="left:1031.0px;top:738.0px;width:22.0px;height:22.0px;background:#3574f0;border-radius:4px"></div>
<svg class="b" style="left:1031.0px;top:738.0px;" width="22.0" height="22.0" viewBox="0 0 22.000000 22.000000" fill="none"><path d="M3.30 11.44 L8.47 16.06 L18.48 4.62" stroke="#fff" stroke-width="1.70" stroke-linecap="round" stroke-linejoin="round"/></svg>
<span id="t84" class="t" style="left:1067.0px;top:740.0px;font-size:22.1px;color:#1f2326;letter-spacing:0.027px;">Resolved</span>
<span id="t85" class="t" style="left:827.3px;top:804.0px;font-size:22.1px;color:#1f2326;letter-spacing:0.618px;">Description</span>
<div class="b" style="left:1031.3px;top:795.3px;width:383.4px;height:101.3px;border:1.4px solid #d1d3db;box-sizing:border-box;border-radius:5px;background:#fff"></div>
<div class="b" style="left:1367.0px;top:849.0px;width:33.0px;height:33.0px;border-radius:50%;background:linear-gradient(135deg,#1fa5e6 0%,#3b7cec 50%,#5a55d6 100%)"></div>
<svg class="b" style="left:1367.0px;top:849.0px;" width="33.0" height="33.0" viewBox="-16.5 -16.5 33 33" fill="none"><path d="M-7.6 -0.3 L-1.5 5.0 L7.7 -4.2" stroke="#fff" stroke-width="2.3" stroke-linecap="round" stroke-linejoin="round"/></svg>
<span id="t86" class="t" style="left:826.7px;top:928.0px;font-size:22.1px;color:#1f2326;letter-spacing:0.551px;">Color</span>
<div class="b" style="left:1031.1px;top:920.0px;width:41.6px;height:41.5px;background:#f7f8fa;border-radius:4px"></div>
<span id="t87" class="t" style="left:1045.7px;top:930.0px;font-size:22.6px;color:#1f2326;">a</span>
<div class="b" style="left:1077.4px;top:920.0px;width:41.6px;height:41.5px;background:#c2e6cb;border-radius:4px"></div>
<span id="t88" class="t" style="left:1092.0px;top:930.0px;font-size:22.6px;color:#1b7a3a;">a</span>
<div class="b" style="left:1123.8px;top:920.0px;width:41.6px;height:41.5px;background:#b5e6e6;border-radius:4px"></div>
<span id="t89" class="t" style="left:1138.4px;top:930.0px;font-size:22.6px;color:#0a7578;">a</span>
<div class="b" style="left:1170.1px;top:920.0px;width:41.6px;height:41.5px;background:#d4e0fc;border-radius:4px"></div>
<span id="t90" class="t" style="left:1184.7px;top:930.0px;font-size:22.6px;color:#2a4a9c;">a</span>
<div class="b" style="left:1216.4px;top:920.0px;width:41.6px;height:41.5px;background:#fbc4e2;border-radius:4px"></div>
<span id="t91" class="t" style="left:1231.0px;top:930.0px;font-size:22.6px;color:#c2187a;">a</span>
<div class="b" style="left:1262.8px;top:920.0px;width:41.6px;height:41.5px;background:#fdd57a;border-radius:4px"></div>
<span id="t92" class="t" style="left:1277.3px;top:930.0px;font-size:22.6px;color:#6b4e0c;">a</span>
<div class="b" style="left:1309.1px;top:920.0px;width:41.6px;height:41.5px;background:#ebdcaa;border-radius:4px"></div>
<span id="t93" class="t" style="left:1323.7px;top:930.0px;font-size:22.6px;color:#54461c;">a</span>
<div class="b" style="left:1031.1px;top:966.5px;width:41.6px;height:41.5px;background:#c9ccd9;border-radius:4px"></div>
<span id="t94" class="t" style="left:1045.7px;top:976.0px;font-size:22.6px;color:#1f2326;">a</span>
<div class="b" style="left:1077.4px;top:966.5px;width:41.6px;height:41.5px;background:#8cc69b;border-radius:4px"></div>
<span id="t95" class="t" style="left:1092.0px;top:976.0px;font-size:22.6px;color:#1b4426;">a</span>
<div class="b" style="left:1123.8px;top:966.5px;width:41.6px;height:41.5px;background:#80cdcf;border-radius:4px"></div>
<span id="t96" class="t" style="left:1138.4px;top:976.0px;font-size:22.6px;color:#083838;">a</span>
<div class="b" style="left:1170.1px;top:966.5px;width:41.6px;height:41.5px;background:#a5bef8;border-radius:4px"></div>
<span id="t97" class="t" style="left:1184.7px;top:976.0px;font-size:22.6px;color:#25387a;">a</span>
<div class="b" style="left:1216.4px;top:966.5px;width:41.6px;height:41.5px;background:#f274b9;border-radius:4px"></div>
<span id="t98" class="t" style="left:1231.0px;top:976.0px;font-size:22.6px;color:#5e0838;">a</span>
<div class="b" style="left:1262.8px;top:966.5px;width:41.6px;height:41.5px;background:#fdae10;border-radius:4px"></div>
<span id="t99" class="t" style="left:1277.3px;top:976.0px;font-size:22.6px;color:#46340a;">a</span>
<div class="b" style="left:1309.1px;top:966.5px;width:41.6px;height:41.5px;background:#dbc583;border-radius:4px"></div>
<span id="t100" class="t" style="left:1323.7px;top:976.0px;font-size:22.6px;color:#46391a;">a</span>
<div class="b" style="left:1031.1px;top:1013.0px;width:41.6px;height:41.5px;background:#82859a;border-radius:4px"></div>
<span id="t101" class="t" style="left:1045.7px;top:1023.0px;font-size:22.6px;color:#ffffff;">a</span>
<div class="b" style="left:1077.4px;top:1013.0px;width:41.6px;height:41.5px;background:#208a3c;border-radius:4px"></div>
<span id="t102" class="t" style="left:1092.0px;top:1023.0px;font-size:22.6px;color:#ffffff;">a</span>
<div class="b" style="left:1123.8px;top:1013.0px;width:41.6px;height:41.5px;background:#069da0;border-radius:4px"></div>
<span id="t103" class="t" style="left:1138.4px;top:1023.0px;font-size:22.6px;color:#ffffff;">a</span>
<div class="b" style="left:1170.1px;top:1013.0px;width:41.6px;height:41.5px;background:#3574f0;border-radius:4px"></div>
<span id="t104" class="t" style="left:1184.7px;top:1023.0px;font-size:22.6px;color:#ffffff;">a</span>
<div class="b" style="left:1216.4px;top:1013.0px;width:41.6px;height:41.5px;background:#e30d8a;border-radius:4px"></div>
<span id="t105" class="t" style="left:1231.0px;top:1023.0px;font-size:22.6px;color:#ffffff;">a</span>
<div class="b" style="left:1262.8px;top:1013.0px;width:41.6px;height:41.5px;background:#e56e1a;border-radius:4px"></div>
<span id="t106" class="t" style="left:1277.3px;top:1023.0px;font-size:22.6px;color:#1f1005;">a</span>
<div class="b" style="left:1309.1px;top:1013.0px;width:41.6px;height:41.5px;background:#bd5717;border-radius:4px"></div>
<span id="t107" class="t" style="left:1323.7px;top:1023.0px;font-size:22.6px;color:#ffe9dc;">a</span>
<div class="b" style="left:1031.1px;top:1059.5px;width:41.6px;height:41.5px;background:#4b4e5c;border-radius:4px"></div>
<span id="t108" class="t" style="left:1045.7px;top:1069.0px;font-size:22.6px;color:#ffffff;">a</span>
<div class="b" style="left:1077.4px;top:1059.5px;width:41.6px;height:41.5px;background:#1f8039;border-radius:4px"></div>
<span id="t109" class="t" style="left:1092.0px;top:1069.0px;font-size:22.6px;color:#ffffff;">a</span>
<div class="b" style="left:1123.8px;top:1059.5px;width:41.6px;height:41.5px;background:#098287;border-radius:4px"></div>
<span id="t110" class="t" style="left:1138.4px;top:1069.0px;font-size:22.6px;color:#ffffff;">a</span>
<div class="b" style="left:1170.1px;top:1059.5px;width:41.6px;height:41.5px;background:#325cbe;border-radius:4px"></div>
<span id="t111" class="t" style="left:1184.7px;top:1069.0px;font-size:22.6px;color:#ffffff;">a</span>
<div class="b" style="left:1216.4px;top:1059.5px;width:41.6px;height:41.5px;background:#bf0f73;border-radius:4px"></div>
<span id="t112" class="t" style="left:1231.0px;top:1069.0px;font-size:22.6px;color:#ffd0e6;">a</span>
<div class="b" style="left:1262.8px;top:1059.5px;width:41.6px;height:41.5px;background:#dc3b4e;border-radius:4px"></div>
<span id="t113" class="t" style="left:1277.3px;top:1069.0px;font-size:22.6px;color:#ffffff;">a</span>
<div class="b" style="left:1309.1px;top:1059.5px;width:41.6px;height:41.5px;background:#893f16;border-radius:4px"></div>
<span id="t114" class="t" style="left:1323.7px;top:1069.0px;font-size:22.6px;color:#ffe0cc;">a</span>
<div class="b" style="left:1031.1px;top:1106.0px;width:41.6px;height:41.5px;background:#27282e;border-radius:4px"></div>
<span id="t115" class="t" style="left:1045.7px;top:1116.0px;font-size:22.6px;color:#ffffff;">a</span>
<div class="b" style="left:1077.4px;top:1106.0px;width:41.6px;height:41.5px;background:#1c572c;border-radius:4px"></div>
<span id="t116" class="t" style="left:1092.0px;top:1116.0px;font-size:22.6px;color:#ffffff;">a</span>
<div class="b" style="left:1123.8px;top:1106.0px;width:41.6px;height:41.5px;background:#0c686c;border-radius:4px"></div>
<span id="t117" class="t" style="left:1138.4px;top:1116.0px;font-size:22.6px;color:#b8f0ee;">a</span>
<div class="b" style="left:1170.1px;top:1106.0px;width:41.6px;height:41.5px;background:#294787;border-radius:4px"></div>
<span id="t118" class="t" style="left:1184.7px;top:1116.0px;font-size:22.6px;color:#dcd0ff;">a</span>
<div class="b" style="left:1216.4px;top:1106.0px;width:41.6px;height:41.5px;background:#8a0b55;border-radius:4px"></div>
<span id="t119" class="t" style="left:1231.0px;top:1116.0px;font-size:22.6px;color:#ffd0e6;">a</span>
<div class="b" style="left:1262.8px;top:1106.0px;width:41.6px;height:41.5px;background:#942531;border-radius:4px"></div>
<span id="t120" class="t" style="left:1277.3px;top:1116.0px;font-size:22.6px;color:#ffd8d8;">a</span>
<div class="b" style="left:1309.1px;top:1106.0px;width:41.6px;height:41.5px;background:#5c451f;border-radius:4px"></div>
<span id="t121" class="t" style="left:1323.7px;top:1116.0px;font-size:22.6px;color:#ffe0a0;">a</span>
<div class="b" style="left:1030.6px;top:1152.0px;width:322.6px;height:43.8px;border:1.6px solid #6f96f3;box-sizing:border-box;border-radius:5px;background:#fff;box-shadow:0 0 0 1.6px #c3d4fb"></div>
<span id="t122" class="t" style="left:1148.6px;top:1163.0px;font-size:22.1px;color:#1f2326;letter-spacing:0.674px;">No color</span>
<div class="b" style="left:826.0px;top:1234.3px;width:94.7px;height:37.4px;background:#3574f0;border-radius:6px"></div>
<span id="t123" class="t" style="left:852.2px;top:1245.0px;font-size:18.5px;color:#fff;letter-spacing:0.176px;">Save</span>
<div class="b" style="left:934.4px;top:1234.3px;width:113.0px;height:37.4px;border:1.4px solid #d1d3db;box-sizing:border-box;border-radius:6px;background:#fff"></div>
<span id="t124" class="t" style="left:959.9px;top:1245.0px;font-size:18.5px;color:#1f2326;letter-spacing:0.701px;">Cancel</span>
</form>
</div>
</body>
</html>
